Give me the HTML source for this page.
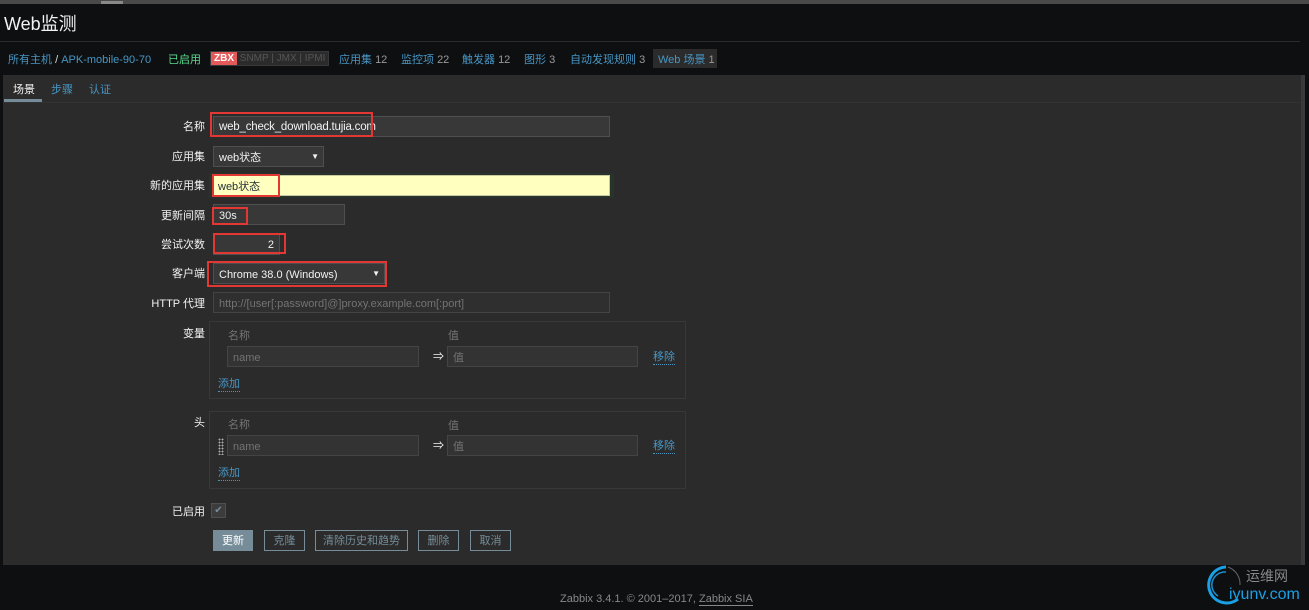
<!DOCTYPE html>
<html><head><meta charset="utf-8"><style>
*{margin:0;padding:0;box-sizing:border-box}
body{width:1309px;height:610px;background:#0e0f11;font-family:"Liberation Sans","Noto Sans CJK SC",sans-serif;font-size:11px;line-height:13px;color:#f2f2f2;position:relative;overflow:hidden}
.a{position:absolute;white-space:nowrap}
.lbl{position:absolute;right:1104px;text-align:right;color:#f2f2f2;font-size:11px;margin-top:2px}
.in{position:absolute;background:#383838;border:1px solid #4f4f4f;height:21px;padding:3px 5px;color:#f2f2f2;font-size:11px;line-height:14px}
.ph{color:#737373}
.red{position:absolute;border:2px solid #e33734}
.lnk{color:#4796c4}
.m{margin-top:2px}
.btn{position:absolute;top:530px;height:21px;border:1px solid #768d99;color:#768d99;padding:4px 0 0;text-align:center;font-size:11px}
.ul{border-bottom:1px dotted #4796c4}
</style></head><body>
<div class="a" style="left:0;top:0;width:1309px;height:4px;background:#4a4a4a"></div>
<div class="a" style="left:101px;top:1px;width:22px;height:3px;background:#888"></div>
<div class="a" style="left:4px;top:13px;font-size:18px;line-height:22px;color:#f2f2f2">Web监测</div>
<div class="a" style="left:0;top:41px;width:1300px;height:1px;background:#2a2b2d"></div>
<div class="a m" style="left:8px;top:52px" ><span class="lnk">所有主机</span> <span style="color:#ddd">/</span> <span class="lnk">APK-mobile-90-70</span></div>
<div class="a m" style="left:168px;top:52px;color:#59db8f">已启用</div>
<div class="a" style="left:210px;top:51px;height:15px;border:1px solid #383838;background:#2b2b2b;font-size:10px;color:#555;line-height:13px">
<span style="background:#e45959;color:#fff;padding:0 3px;display:inline-block;font-weight:bold">ZBX</span> SNMP | JMX | IPMI&nbsp;</div>
<div class="a lnk m" style="left:339px;top:52px">应用集 <span style="color:#999">12</span></div>
<div class="a lnk m" style="left:401px;top:52px">监控项 <span style="color:#999">22</span></div>
<div class="a lnk m" style="left:462px;top:52px">触发器 <span style="color:#999">12</span></div>
<div class="a lnk m" style="left:524px;top:52px">图形 <span style="color:#999">3</span></div>
<div class="a lnk m" style="left:570px;top:52px">自动发现规则 <span style="color:#999">3</span></div>
<div class="a lnk" style="left:653px;top:49px;width:64px;height:19px;background:#2b2b2b;padding:5px 0 0 5px">Web 场景 <span style="color:#999">1</span></div>

<div class="a" style="left:3px;top:75px;width:1298px;height:490px;background:#2b2b2b"></div>
<div class="a" style="left:1301px;top:75px;width:4px;height:490px;background:#3a3a3a"></div>
<div class="a" style="left:3px;top:102px;width:1298px;height:1px;background:#333"></div>
<div class="a m" style="left:13px;top:82px;color:#f2f2f2">场景</div>
<div class="a" style="left:4px;top:99px;width:38px;height:3px;background:#768d99"></div>
<div class="a lnk m" style="left:51px;top:82px">步骤</div>
<div class="a lnk m" style="left:89px;top:82px">认证</div>

<div class="lbl" style="top:119px">名称</div>
<div class="in" style="left:213px;top:116px;width:397px;font-size:11.5px;letter-spacing:-0.2px">web_check_download.tujia.com</div>
<div class="red" style="left:210px;top:112px;width:163px;height:25px"></div>

<div class="lbl" style="top:149px">应用集</div>
<div class="in" style="left:213px;top:146px;width:111px;padding-top:4px">web状态<span style="position:absolute;right:4px;font-size:8px;top:3px">▼</span></div>

<div class="lbl" style="top:178px">新的应用集</div>
<div class="a" style="left:209px;top:173px;width:405px;height:25px;background:#28332b"></div>
<div class="in" style="left:212px;top:175px;width:398px;background:#ffffc0;border-color:#c9c9a0;color:#1f2c33;padding-top:4px">web状态</div>
<div class="red" style="left:212px;top:174px;width:68px;height:23px"></div>

<div class="lbl" style="top:208px">更新间隔</div>
<div class="in" style="left:213px;top:204px;width:132px;padding-top:4px">30s</div>
<div class="red" style="left:212px;top:207px;width:36px;height:18px"></div>

<div class="lbl" style="top:237px">尝试次数</div>
<div class="in" style="left:213px;top:234px;width:67px;text-align:right">2</div>
<div class="red" style="left:213px;top:233px;width:73px;height:21px"></div>

<div class="lbl" style="top:266px">客户端</div>
<div class="in" style="left:213px;top:263px;width:172px;padding-top:4px">Chrome 38.0 (Windows)<span style="position:absolute;right:4px;font-size:8px;top:3px">▼</span></div>
<div class="red" style="left:207px;top:261px;width:180px;height:26px"></div>

<div class="lbl" style="top:296px">HTTP 代理</div>
<div class="in ph" style="left:213px;top:292px;width:397px;background:#2f2f2f;border-color:#444;padding-top:4px">http://[user[:password]@]proxy.example.com[:port]</div>

<div class="lbl" style="top:326px">变量</div>
<div class="a" style="left:209px;top:321px;width:477px;height:78px;border:1px solid #383838"></div>
<div class="a ph m" style="left:228px;top:328px">名称</div>
<div class="a ph m" style="left:448px;top:328px">值</div>
<div class="in ph" style="left:227px;top:346px;width:192px;background:#333;border-color:#444;padding-top:4px">name</div>
<div class="a" style="left:433px;top:351px">⇒</div>
<div class="in ph" style="left:447px;top:346px;width:191px;background:#333;border-color:#444;padding-top:4px">值</div>
<div class="a lnk ul m" style="left:653px;top:349px">移除</div>
<div class="a lnk ul m" style="left:218px;top:376px">添加</div>

<div class="lbl" style="top:415px">头</div>
<div class="a" style="left:209px;top:411px;width:477px;height:78px;border:1px solid #383838"></div>
<div class="a ph m" style="left:228px;top:417px">名称</div>
<div class="a ph m" style="left:448px;top:418px">值</div>
<div class="a" style="left:218px;top:438px;width:6px;height:17px;background:radial-gradient(circle,#aaa 0.8px,transparent 1px) 0 0/3px 3px"></div>
<div class="in ph" style="left:227px;top:435px;width:192px;background:#333;border-color:#444;padding-top:4px">name</div>
<div class="a" style="left:433px;top:440px">⇒</div>
<div class="in ph" style="left:447px;top:435px;width:191px;background:#333;border-color:#444;padding-top:4px">值</div>
<div class="a lnk ul m" style="left:653px;top:438px">移除</div>
<div class="a lnk ul m" style="left:218px;top:465px">添加</div>

<div class="lbl" style="top:504px">已启用</div>
<div class="a" style="left:211px;top:503px;width:15px;height:15px;background:#3c3c3c;border:1px solid #4f4f4f;color:#768d99;font-size:10px;line-height:13px;text-align:center">✔</div>

<div class="btn" style="left:213px;width:40px;background:#768d99;color:#fff">更新</div>
<div class="btn" style="left:264px;width:41px">克隆</div>
<div class="btn" style="left:315px;width:93px">清除历史和趋势</div>
<div class="btn" style="left:418px;width:41px">删除</div>
<div class="btn" style="left:470px;width:41px">取消</div>

<div class="a" style="left:560px;top:593px;color:#888;font-size:11px">Zabbix 3.4.1. © 2001–2017, <span style="border-bottom:1px solid #888">Zabbix SIA</span></div>

<svg class="a" style="left:1204px;top:563px" width="40" height="45" viewBox="0 0 40 45">
<path d="M22 4 A18 18 0 1 0 34 36" fill="none" stroke="#1aa0e6" stroke-width="3"/>
<path d="M22 9 A13 13 0 0 0 14 33" fill="none" stroke="#1a8fd0" stroke-width="1.5"/>
<path d="M24 4 A18 18 0 0 1 36 22" fill="none" stroke="#666" stroke-width="1"/>
</svg>
<div class="a" style="left:1246px;top:568px;color:#888;font-size:14px;line-height:16px">运维网</div>
<div class="a" style="left:1229px;top:586px;color:#1aa0e6;font-size:16px;line-height:18px">iyunv.com</div>
</body></html>
